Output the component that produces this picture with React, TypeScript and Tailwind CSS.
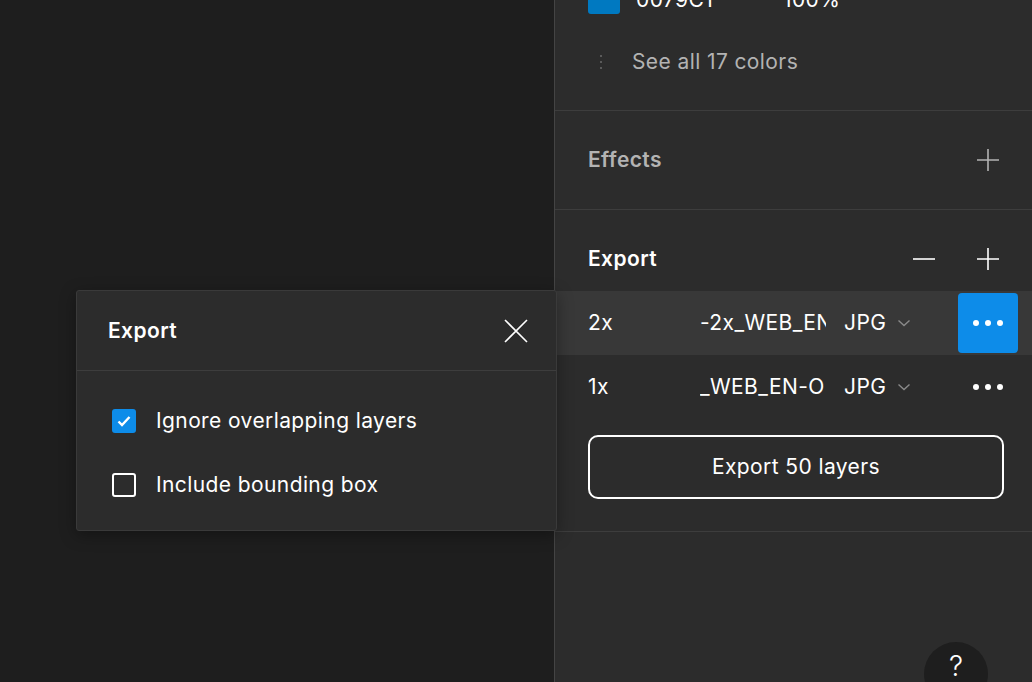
import React from 'react'

const font = { fontFamily: 'Inter, "Noto Sans", sans-serif' }

function PlusIcon({ className }: { className?: string }) {
  return (
    <svg width="24" height="24" viewBox="0 0 24 24" className={className}>
      <path d="M12 1v22M1 12h22" stroke="currentColor" strokeWidth="1.6" fill="none" />
    </svg>
  )
}

function MinusIcon({ className }: { className?: string }) {
  return (
    <svg width="24" height="24" viewBox="0 0 24 24" className={className}>
      <path d="M1 12h22" stroke="currentColor" strokeWidth="1.6" fill="none" />
    </svg>
  )
}

function Chevron() {
  return (
    <svg width="14" height="8" viewBox="0 0 14 8" className="text-[#8a8a8a]">
      <path d="M1.5 1.5l5.5 5 5.5-5" stroke="currentColor" strokeWidth="1.4" fill="none" />
    </svg>
  )
}

function Dots() {
  return (
    <div className="flex items-center gap-[6px]">
      <span className="w-[6px] h-[6px] rounded-full bg-white" />
      <span className="w-[6px] h-[6px] rounded-full bg-white" />
      <span className="w-[6px] h-[6px] rounded-full bg-white" />
    </div>
  )
}

function ExportRow({ scale, file, active }: { scale: string; file: string; active?: boolean }) {
  return (
    <div className={`flex items-center h-[64px] pl-[33px] pr-[14px] ${active ? 'bg-[#383838]' : ''}`}>
      <div className="w-[112px] text-[21px] tracking-[0.4px] text-white">{scale}</div>
      <div className="w-[126px] overflow-hidden whitespace-nowrap text-[21px] tracking-[0.4px] text-white">{file}</div>
      <div className="ml-[18px] text-[21px] tracking-[0.4px] text-white">JPG</div>
      <div className="ml-[11px]">
        <Chevron />
      </div>
      <div
        className={`ml-auto w-[60px] h-[60px] rounded-[4px] flex items-center justify-center ${
          active ? 'bg-[#0d8ce9]' : ''
        }`}
      >
        <Dots />
      </div>
    </div>
  )
}

export default function App() {
  return (
    <div className="flex h-[682px] w-[1032px] overflow-hidden bg-[#1e1e1e]" style={font}>
      {/* canvas */}
      <div className="relative w-[554px] shrink-0 bg-[#1e1e1e]">
        <div className="absolute left-[76px] top-[290px] w-[481px] z-10 bg-[#2c2c2c] border border-[#3a3a3a] rounded-[3px] shadow-[0_4px_16px_rgba(0,0,0,0.35)]">
          <div className="flex items-center justify-between h-[80px] pl-[31px] pr-[28px] border-b border-[#3d3d3d]">
            <span className="text-[21px] tracking-[0.4px] font-semibold text-white">Export</span>
            <svg width="24" height="24" viewBox="0 0 24 24" className="text-white">
              <path d="M1 1l22 22M23 1L1 23" stroke="currentColor" strokeWidth="1.6" fill="none" />
            </svg>
          </div>
          <div className="pt-[18px] pb-[13px]">
            <div className="flex items-center h-[64px] pl-[35px] gap-[20px]">
              <span className="w-[24px] h-[24px] rounded-[3px] bg-[#0d8ce9] flex items-center justify-center">
                <svg width="16" height="16" viewBox="0 0 16 16">
                  <path d="M2.5 8.5l3.5 3.5 7.5-8" stroke="white" strokeWidth="2.4" fill="none" />
                </svg>
              </span>
              <span className="text-[21px] tracking-[0.4px] text-white">Ignore overlapping layers</span>
            </div>
            <div className="flex items-center h-[64px] pl-[35px] gap-[20px]">
              <span className="w-[24px] h-[24px] rounded-[3px] border-2 border-white" />
              <span className="text-[21px] tracking-[0.4px] text-white">Include bounding box</span>
            </div>
          </div>
        </div>
      </div>

      {/* right panel */}
      <div className="relative flex-1 bg-[#2c2c2c] border-l border-[#444444]">
        {/* colors */}
        <div className="border-b border-[#3d3d3d]">
          <div className="flex items-center h-[48px] -mt-[26px] pl-[33px]">
            <span className="w-[32px] h-[32px] rounded-[3px] bg-[#0079c1]" />
            <span className="ml-[16px] w-[147px] pt-[3px] text-[21px] tracking-[0.4px] text-white">0079C1</span>
            <span className="pt-[3px] text-[21px] tracking-[0.4px] text-white">100%</span>
          </div>
          <div className="flex items-center h-[80px] pl-[45px] pb-[8px] box-content">
            <div className="flex flex-col gap-[4px]">
              <span className="w-[2px] h-[2px] rounded-full bg-[#6a6a6a]" />
              <span className="w-[2px] h-[2px] rounded-full bg-[#6a6a6a]" />
              <span className="w-[2px] h-[2px] rounded-full bg-[#6a6a6a]" />
            </div>
            <span className="ml-[30px] text-[21px] tracking-[0.4px] text-[#b3b3b3]">See all 17 colors</span>
          </div>
        </div>

        {/* effects */}
        <div className="flex items-center justify-between h-[99px] pl-[33px] pr-[32px] border-b border-[#3d3d3d]">
          <span className="text-[21px] tracking-[0.4px] font-semibold text-[#b3b3b3]">Effects</span>
          <PlusIcon className="text-[#b3b3b3]" />
        </div>

        {/* export */}
        <div className="pt-[16px] pb-[32px] border-b border-[#3d3d3d]">
          <div className="flex items-center h-[65px] pl-[33px] pr-[32px]">
            <span className="text-[21px] tracking-[0.4px] font-semibold text-white">Export</span>
            <MinusIcon className="ml-auto text-white" />
            <PlusIcon className="ml-[40px] text-white" />
          </div>
          <ExportRow scale="2x" file="-2x_WEB_EN-OVERVIEW" active />
          <ExportRow scale="1x" file="_WEB_EN-O" />
          <div className="pl-[33px] pr-[28px] mt-[16px]">
            <button className="w-full h-[64px] rounded-[10px] border-2 border-white text-[21px] tracking-[0.4px] text-white">
              Export 50 layers
            </button>
          </div>
        </div>

        <div className="absolute left-[369px] top-[642px] w-[64px] h-[64px] rounded-full bg-[#1e1e1e] flex justify-center pt-[10px]">
          <span className="text-[28px] font-light text-white leading-none">?</span>
        </div>
      </div>
    </div>
  )
}
